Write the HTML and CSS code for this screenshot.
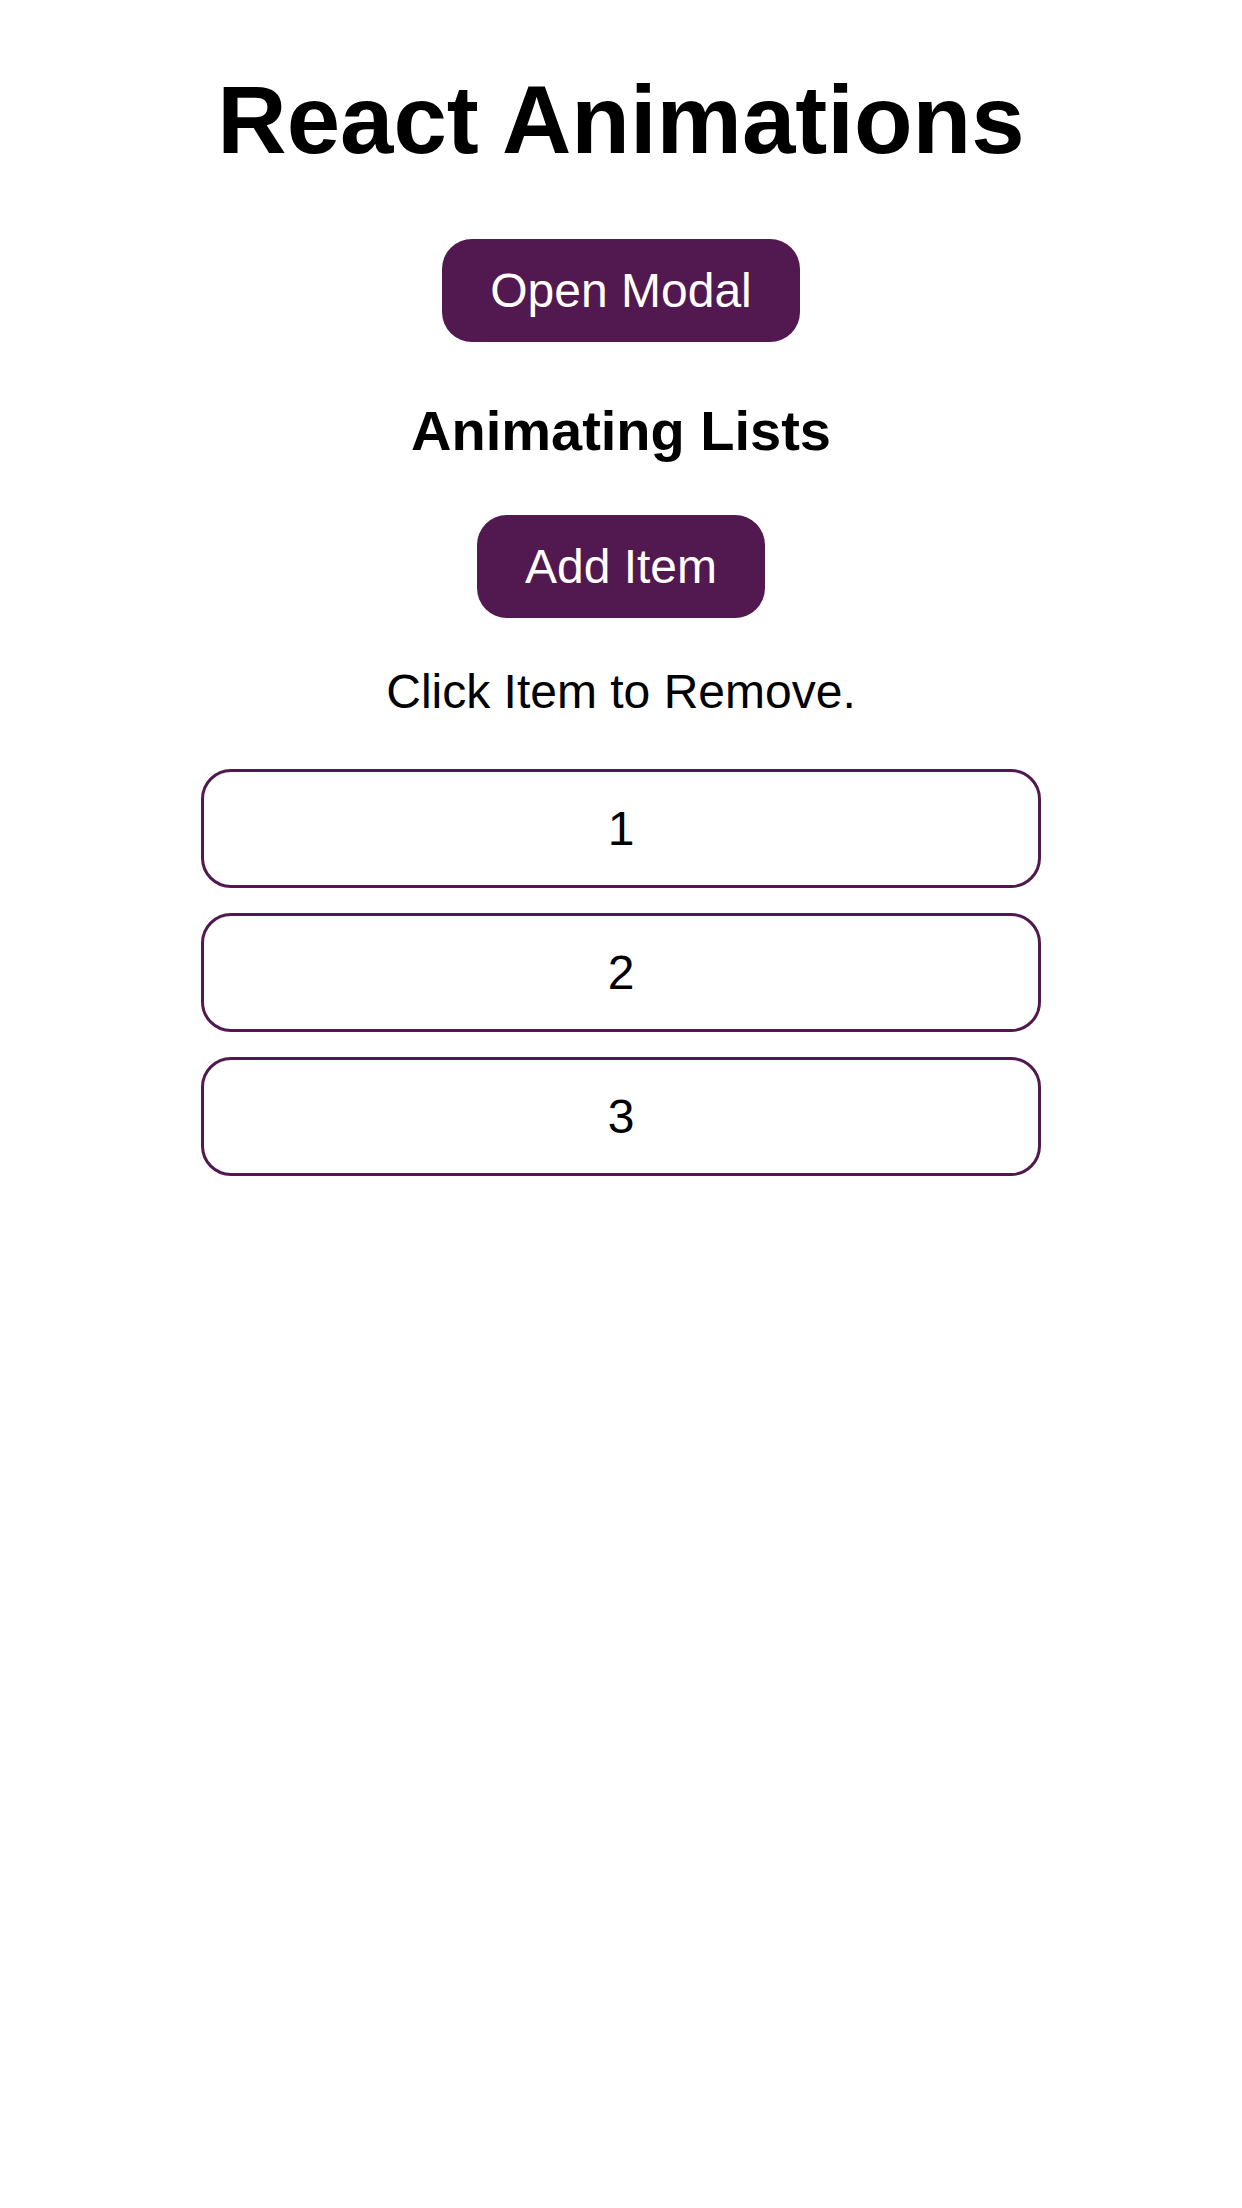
FILE: index.html
```html
<!DOCTYPE html>
<html lang="en">
<head>
<meta charset="utf-8">
<title>React Animations</title>
<link rel="stylesheet" href="styles.css">
</head>
<body>
<div class="app">
  <h1 class="title">React Animations</h1>
  <button class="btn btn-modal">Open Modal</button>
  <h3 class="subtitle">Animating Lists</h3>
  <button class="btn btn-add">Add Item</button>
  <p class="hint">Click Item to Remove.</p>
  <ul class="list">
    <li class="list-item">1</li>
    <li class="list-item">2</li>
    <li class="list-item">3</li>
  </ul>
</div>
</body>
</html>
```

FILE: styles.css
```css
html, body {
  margin: 0;
  padding: 0;
  background: #ffffff;
}

body {
  font-family: "Liberation Sans", Arial, Helvetica, sans-serif;
  color: #000000;
  width: 1242px;
  min-height: 2208px;
}

.app {
  display: flex;
  flex-direction: column;
  align-items: center;
  padding-top: 65px;
}

.title {
  margin: 0;
  font-size: 96px;
  font-weight: 700;
  line-height: 110px;
}

.btn {
  font-family: "Liberation Sans", Arial, Helvetica, sans-serif;
  font-size: 48px;
  line-height: 55px;
  color: #ffffff;
  background: #521850;
  border: none;
  border-radius: 30px;
  padding: 24px 48px;
  cursor: pointer;
}

.btn-modal {
  margin-top: 64px;
}

.subtitle {
  margin: 57px 0 0;
  font-size: 56px;
  font-weight: 700;
  line-height: 64px;
}

.btn-add {
  margin-top: 52px;
}

.hint {
  margin: 46px 0 0;
  font-size: 48px;
  line-height: 55px;
}

.list {
  list-style: none;
  margin: 50px 0 0;
  padding: 0;
  display: flex;
  flex-direction: column;
  gap: 25px;
  width: 840px;
}

.list-item {
  box-sizing: border-box;
  height: 119px;
  border: 3px solid #521850;
  border-radius: 30px;
  display: flex;
  align-items: center;
  justify-content: center;
  font-size: 48px;
  line-height: 55px;
}
```
